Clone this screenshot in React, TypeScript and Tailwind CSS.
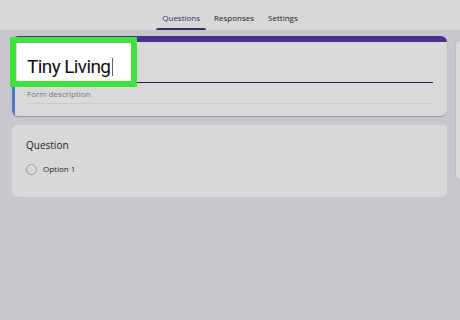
import React from 'react';

const font = { fontFamily: '"Open Sans", "Noto Sans", Arial, sans-serif' };

export default function App() {
    return (
        <div className="relative w-[460px] h-[320px] overflow-hidden bg-[#c9c6ce]" style={font}>
            {/* tab header */}
            <div className="h-[30px] bg-[#d8d8d8] flex justify-center items-end pr-[6px]">
                <div className="relative px-[6px] pb-[6px] text-[8px] font-medium text-[#3b2a72]">
                    Questions
                    <div className="absolute left-0 right-0 bottom-0 h-[2px] bg-[#3b2a72] rounded-t-sm" />
                </div>
                <div className="ml-[8px] pb-[6px] text-[8px] font-medium text-[#222]">Responses</div>
                <div className="ml-[14px] pb-[6px] text-[8px] font-medium text-[#222]">Settings</div>
            </div>

            <div className="flex flex-col gap-[9px] pl-[12px] pt-[6px] w-[447px]">
                {/* title card */}
                <div className="relative h-[80px] rounded-[6px] overflow-hidden bg-[#d9d9d9] shadow-[0_1px_1px_rgba(0,0,0,0.25)]">
                    <div className="h-[6px] bg-[#4d2f8c]" />
                    <div className="flex h-[74px]">
                        <div className="w-[3px] bg-[#4a78d0]" />
                        <div className="flex-1 pl-[2px] pr-[14px]">
                            <div className="relative h-[41px] w-[116px] bg-white flex items-end pl-[10px] pb-[7px]">
                                <span className="text-[19px] leading-none text-[#111] tracking-[-0.6px]" style={{ fontFamily: 'Roboto, Arial, sans-serif' }}>Tiny Living</span>
                                <span className="ml-[2px] w-[1px] h-[18px] bg-[#666]" />
                            </div>
                            <div className="h-[1px] bg-[#2a1a5e] -mt-[1px]" />
                            <div className="pl-[10px] pt-[5px] text-[8px] text-[#777]">Form description</div>
                            <div className="ml-[10px] mt-[3px] h-[1px] bg-[#cdcdcd]" />
                        </div>
                    </div>
                </div>

                {/* question card */}
                <div className="h-[72px] rounded-[5px] bg-[#d8d8d8] pl-[14px] pt-[13px]">
                    <div className="text-[10px] text-[#222]">Question</div>
                    <div className="flex items-center gap-[6px] mt-[10px]">
                        <div className="w-[11px] h-[11px] rounded-full border border-[#999]" />
                        <span className="text-[8px] text-[#222]">Option 1</span>
                    </div>
                </div>
            </div>

            {/* green highlight over title */}
            <div className="absolute left-[10px] top-[37px] w-[127px] h-[50px] border-[6px] border-[#3fe23f]" />

            {/* side toolbar, partly off screen */}
            <div className="absolute left-[455px] top-[40px] w-[20px] h-[140px] rounded-[5px] bg-[#d9d9d9] border border-[#bdbdbd]" />
        </div>
    );
}
